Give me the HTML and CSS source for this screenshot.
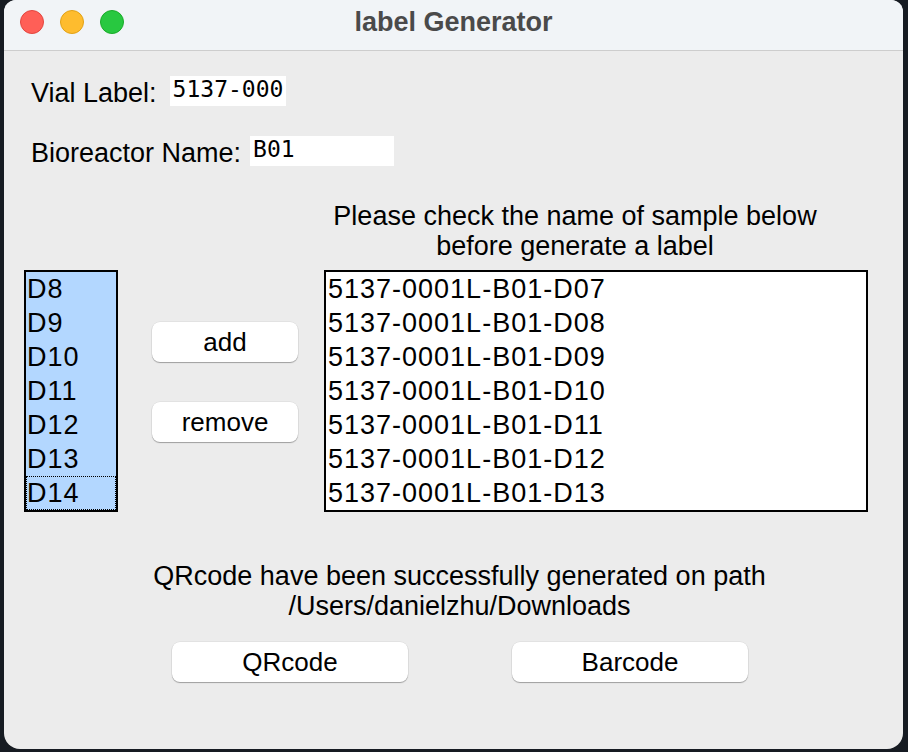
FILE: index.html
```html
<!DOCTYPE html>
<html lang="en">
<head>
<meta charset="utf-8">
<title>label Generator</title>
<link rel="stylesheet" href="styles.css">
</head>
<body>
<div class="window">
  <div class="titlebar">
    <div class="lights">
      <span class="light red"></span>
      <span class="light yellow"></span>
      <span class="light green"></span>
    </div>
    <div class="title">label Generator</div>
    <div class="spacer"></div>
  </div>
  <div class="content">
    <div class="form-row">
      <span class="label">Vial Label:</span>
      <span class="entry entry-vial">5137-000</span>
    </div>
    <div class="form-row row-bio">
      <span class="label">Bioreactor Name:</span>
      <span class="entry entry-bio">B01</span>
    </div>
    <p class="hint">Please check the name of sample below<br>before generate a label</p>
    <div class="lists">
      <ul class="listbox days">
        <li>D8</li>
        <li>D9</li>
        <li>D10</li>
        <li>D11</li>
        <li>D12</li>
        <li>D13</li>
        <li class="focus">D14</li>
      </ul>
      <div class="actions">
        <button class="btn">add</button>
        <button class="btn">remove</button>
      </div>
      <ul class="listbox samples">
        <li>5137-0001L-B01-D07</li>
        <li>5137-0001L-B01-D08</li>
        <li>5137-0001L-B01-D09</li>
        <li>5137-0001L-B01-D10</li>
        <li>5137-0001L-B01-D11</li>
        <li>5137-0001L-B01-D12</li>
        <li>5137-0001L-B01-D13</li>
      </ul>
    </div>
    <p class="status">QRcode have been successfully generated on path<br>/Users/danielzhu/Downloads</p>
    <div class="gen-buttons">
      <button class="btn btn-wide">QRcode</button>
      <button class="btn btn-wide">Barcode</button>
    </div>
  </div>
</div>
</body>
</html>
```
FILE: styles.css
```css
html, body {
  margin: 0;
  padding: 0;
}
body {
  background: #161b22;
  width: 908px;
  height: 752px;
  overflow: hidden;
  font-family: "Liberation Sans", Arial, sans-serif;
}
.window {
  margin-left: 4px;
  width: 899px;
  height: 749px;
  background: #ececec;
  border-radius: 12px 12px 16px 16px;
  overflow: hidden;
  color: #000;
}
.titlebar {
  height: 50px;
  border-bottom: 1px solid #cdcdcd;
  background: #f1f4f7;
  display: grid;
  grid-template-columns: 1fr auto 1fr;
  align-items: center;
}
.lights {
  display: flex;
  gap: 16px;
  padding-left: 16px;
  margin-top: -6px;
}
.light {
  width: 24px;
  height: 24px;
  border-radius: 50%;
  box-sizing: border-box;
  border: 1px solid;
}
.red { background: #ff5f57; border-color: #e2463f; }
.yellow { background: #febc2e; border-color: #e1a116; }
.green { background: #28c840; border-color: #1aab29; }
.title {
  font-weight: bold;
  font-size: 27px;
  line-height: 30px;
  color: #4a4a4a;
  margin-top: -6px;
}
.content {
  padding-top: 25px;
}
.form-row {
  display: flex;
  align-items: flex-start;
  padding-left: 27px;
  height: 30px;
}
.row-bio {
  margin-top: 30px;
}
.label {
  font-size: 27px;
  line-height: 30px;
  margin-top: 2px;
}
.entry {
  background: #fff;
  height: 30px;
  box-sizing: border-box;
  padding-left: 3px;
  font-family: "DejaVu Sans Mono", "Liberation Mono", monospace;
  font-size: 23px;
  line-height: 26px;
  white-space: nowrap;
  overflow: hidden;
}
.entry-vial { width: 116px; margin-left: 13px; }
.entry-bio { width: 144px; margin-left: 9px; }
.hint {
  margin: 35px 0 0 296px;
  width: 550px;
  text-align: center;
  font-size: 27px;
  line-height: 30px;
}
.lists {
  display: flex;
  align-items: flex-start;
  margin-top: 9px;
  padding-left: 20px;
}
.listbox {
  list-style: none;
  margin: 0;
  padding: 0;
  border: 2px solid #000;
  font-size: 27px;
  line-height: 34px;
  height: 238px;
}
.listbox li {
  height: 34px;
  box-sizing: border-box;
  white-space: nowrap;
  letter-spacing: 1px;
}
.days {
  width: 90px;
  background: #b3d7ff;
}
.days li {
  padding-left: 1px;
}
.days li.focus {
  outline: 1px dotted #000;
  outline-offset: -1px;
}
.samples {
  width: 540px;
  background: #fff;
  margin-left: 26px;
}
.samples li {
  padding-left: 2px;
}
.actions {
  display: flex;
  flex-direction: column;
  gap: 40px;
  margin-left: 34px;
  padding-top: 52px;
}
.btn {
  width: 146px;
  height: 40px;
  background: #fff;
  border: none;
  border-radius: 8px;
  box-shadow: 0 1px 1px rgba(0, 0, 0, 0.3), 0 0 0 0.5px rgba(0, 0, 0, 0.08);
  font-family: inherit;
  font-size: 26px;
  color: #000;
  padding: 0;
}
.btn-wide {
  width: 236px;
}
.status {
  margin: 49px 0 0 12px;
  text-align: center;
  font-size: 27px;
  line-height: 30px;
}
.gen-buttons {
  display: flex;
  gap: 104px;
  margin-top: 21px;
  padding-left: 168px;
}
```
